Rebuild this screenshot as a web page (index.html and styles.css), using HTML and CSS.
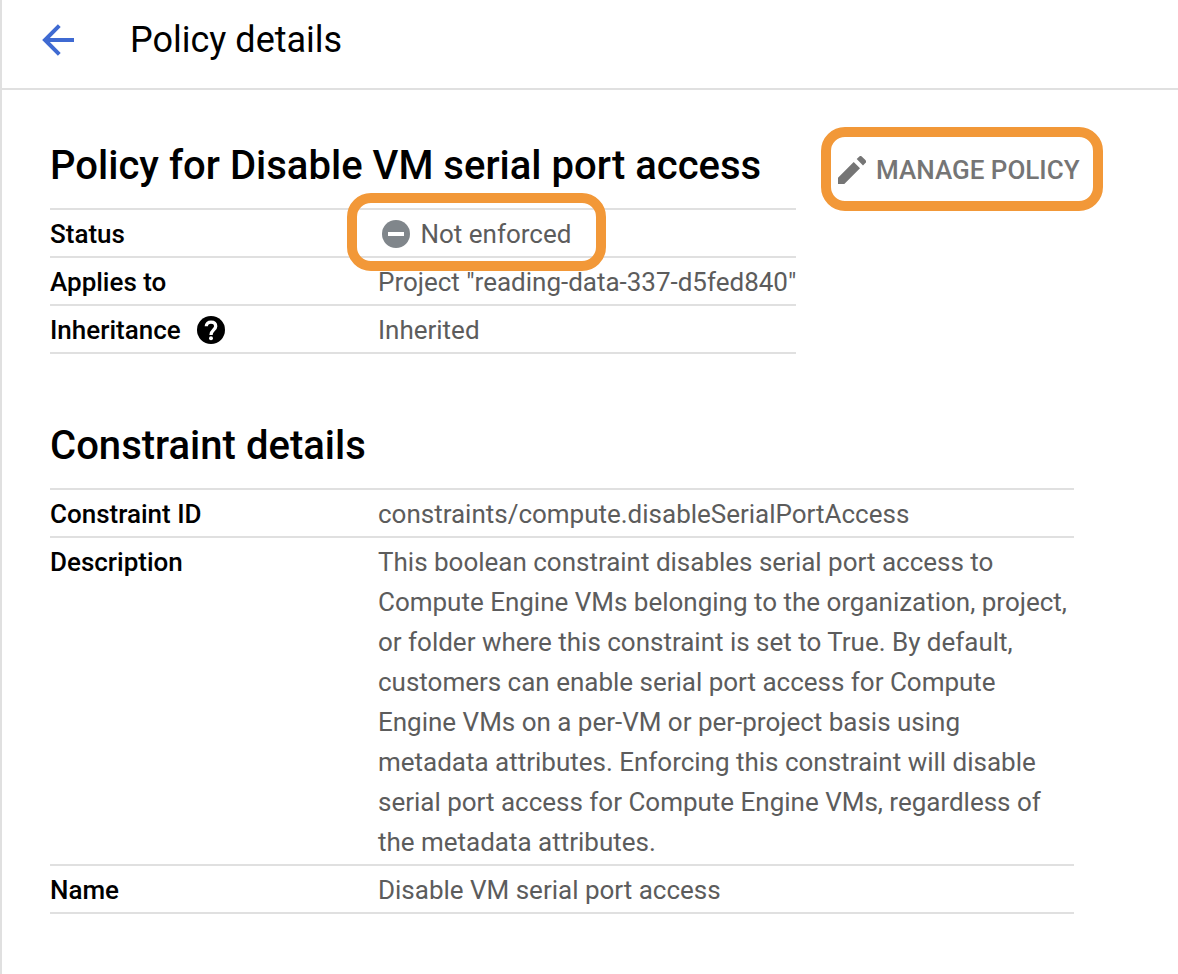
FILE: index.html
```html
<!DOCTYPE html>
<html lang="en">
<head>
<meta charset="utf-8">
<title>Policy details</title>
<link rel="stylesheet" href="styles.css">
</head>
<body>
<div class="page">
  <header class="topbar">
    <svg class="back" viewBox="0 0 34 32" width="34" height="32"><path d="M17.300 1.700 3 16l14.300 14.300M3 16h29" fill="none" stroke="#3f6ad2" stroke-width="4"/></svg>
    <h1 class="title">Policy details</h1>
  </header>
  <main class="content">
    <div class="policy">
      <section class="summary">
        <h2 class="heading">Policy for Disable VM serial port access</h2>
        <dl class="table">
          <div class="row"><dt>Status</dt><dd class="status"><span class="highlight"></span><svg class="minus" viewBox="0 0 28 28" width="28" height="28"><circle cx="14" cy="14" r="14" fill="#80868b"/><path d="M6 14h16" stroke="#fff" stroke-width="4"/></svg><span>Not enforced</span></dd></div>
          <div class="row"><dt>Applies to</dt><dd>Project "reading-data-337-d5fed840"</dd></div>
          <div class="row"><dt>Inheritance <svg class="help" viewBox="0 0 28 28" width="28" height="28"><circle cx="14" cy="14" r="14"/><path d="M9.300 10.300C9.300 7.500 11.200 6.100 14 6.100s4.700 1.500 4.700 4.100C18.700 13.800 14 14.200 14 19" fill="none" stroke="#fff" stroke-width="3.300"/><circle cx="14" cy="22.300" r="2" fill="#fff"/></svg></dt><dd>Inherited</dd></div>
        </dl>
      </section>
      <button class="manage" type="button"><svg viewBox="0 0 28 28" width="28" height="28"><path fill="#757575" d="M0 28v-6.300L15.700 6 22 12.300 6.300 28zM18.700 3.100l2.400-2.400a2 2 0 0 1 2.900 0l3.400 3.400a2 2 0 0 1 0 2.900l-2.400 2.400z"/></svg><span>MANAGE POLICY</span></button>
    </div>
    <section class="constraint">
      <h2 class="heading">Constraint details</h2>
      <dl class="table">
        <div class="row"><dt>Constraint ID</dt><dd>constraints/compute.disableSerialPortAccess</dd></div>
        <div class="row"><dt>Description</dt><dd>This boolean constraint disables serial port access to<br>Compute Engine VMs belonging to the organization, project,<br>or folder where this constraint is set to True. By default,<br>customers can enable serial port access for Compute<br>Engine VMs on a per-VM or per-project basis using<br>metadata attributes. Enforcing this constraint will disable<br>serial port access for Compute Engine VMs, regardless of<br>the metadata attributes.</dd></div>
        <div class="row"><dt>Name</dt><dd>Disable VM serial port access</dd></div>
      </dl>
    </section>
  </main>
</div>
</body>
</html>
```
FILE: styles.css
```css
* { box-sizing: border-box; }
body { margin: 0; background: #fff; color: #000; font-family: Roboto, sans-serif; }
.page { height: 974px; border-left: 2px solid #e0e0e0; overflow: hidden; }
.topbar { display: flex; align-items: center; height: 90px; padding: 0 0 8px 40px; border-bottom: 2px solid #e0e0e0; }
.back { display: block; }
.title { margin: 0 0 0 54px; font-size: 36px; font-weight: 400; line-height: 48px; }
.content { padding: 51px 0 0 48px; }
.policy { display: flex; align-items: flex-start; }
.summary { width: 746px; }
.heading { margin: 0 0 17px; font-size: 40px; font-weight: 500; line-height: 50px; letter-spacing: 0.02px; white-space: nowrap; }
.table { margin: 0; border-top: 2px solid #e0e0e0; font-size: 26px; line-height: 40px; }
.row { display: flex; padding: 4px 0 2px; border-bottom: 2px solid #e0e0e0; }
dt { display: flex; align-items: center; align-self: flex-start; flex: 0 0 328px; font-weight: 500; }
dd { margin: 0; color: #5c5c5c; letter-spacing: -0.01px; white-space: nowrap; }
.help { margin-left: 16px; }
.status { position: relative; display: flex; align-items: center; padding-left: 4px; }
.minus { margin-right: 10.500px; }
.highlight { position: absolute; left: -31px; top: -21px; width: 259px; height: 78px; border: 10px solid #f29838; border-radius: 24px; }
.manage { display: flex; align-items: center; flex: none; width: 282px; height: 84px; margin: -14px 0 0 25px; padding: 2px 0 0 7px; border: 10px solid #f29838; border-radius: 24px; background: #fff; color: #757575; font: 500 26px/40px Roboto, sans-serif; white-space: nowrap; }
.manage svg { margin-right: 10px; }
.constraint { width: 1024px; margin-top: 67px; }
```
